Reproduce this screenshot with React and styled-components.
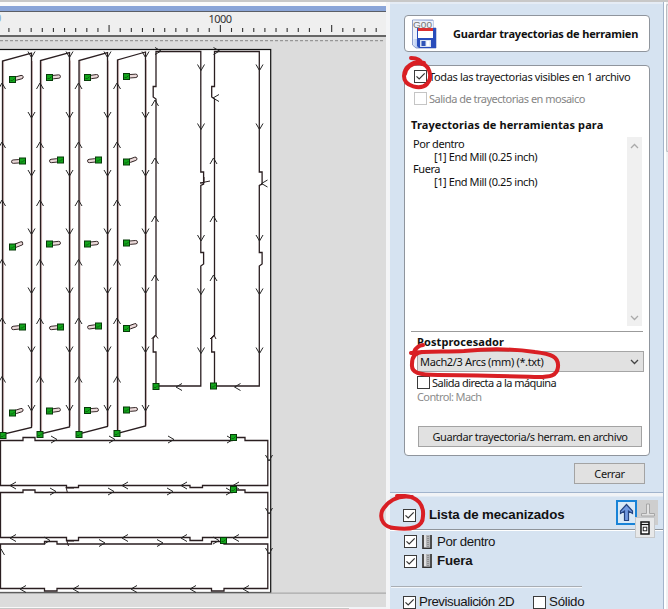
import React from "react";
import styled, { createGlobalStyle } from "styled-components";

const Global = createGlobalStyle`
  * { box-sizing: border-box; }
  body { margin: 0; background: #f1f3f6; overflow: hidden; }
`;

const tahoma = `"Noto Sans", "Open Sans", sans-serif`;
const arial = `"Liberation Sans", Arial, sans-serif`;

const Screen = styled.div`
  position: relative;
  width: 668px;
  height: 609px;
  overflow: hidden;
  display: flex;
  flex-direction: column;
  color: #111;
  font: 11px/13px ${tahoma};
`;
const TopEdge = styled.div`
  height: 2px;
  flex: none;
  background: #c8c8c8;
`;
const Columns = styled.div`
  flex: 1;
  display: flex;
`;
const Workspace = styled.section`
  width: 386px;
  display: flex;
  flex-direction: column;
`;
const TitleBar = styled.div`
  height: 10px;
  border-top: 4px solid #fbfbfb;
  border-bottom: 1px solid #5b5e66;
  background: #8aa5d8;
`;
const Ruler = styled.svg`
  display: block;
  height: 25px;
  background: #efefef;
  border-bottom: 2px solid #666;
`;
const Canvas = styled.svg`
  display: block;
  height: 570px;
  background: #dcdcdc;
`;
const BottomEdge = styled.div`
  height: 2px;
  width: 349px;
  border-top: 1px solid #f8f8f8;
  background: #c6c6c6;
`;
const Sidebar = styled.aside`
  width: 278px;
  display: flex;
  flex-direction: column;
  border-left: 4px solid #f4f5f7;
  border-right: 1px solid #a4b4cb;
`;
const ScrollEdge = styled.div`
  flex: 1;
  background: #f0f1f2;
  border-left: 2px solid #fff;
  padding-top: 2px;
`;
const ScrollPiece = styled.div`
  height: 148px;
  border: 1px solid #b9bcc2;
  border-right: 0;
  border-radius: 2px 0 0 2px;
  background: #e6e7e9;
`;
const SavePanel = styled.section`
  height: 491px;
  padding: 11px 13px 0 14px;
  background: #d6e3f1;
  border-top: 2px solid #e5ecf5;
  border-bottom: 1px solid #a2b4cc;
`;
const Heading = styled.header`
  height: 37px;
  width: 246px;
  border: 1px solid #8f959d;
  border-radius: 4px;
  background: #fff;
  display: flex;
  align-items: center;
  padding: 0 10px 0 6px;
  gap: 16px;
`;
const HeadingText = styled.h1`
  margin: 0;
  width: 186px;
  overflow: hidden;
  white-space: nowrap;
  font: bold 11px/18px ${tahoma};
  letter-spacing: -0.18px;
`;
const FormBox = styled.div`
  margin-top: 13px;
  width: 246px;
  height: 391px;
  border: 1px solid #8f959d;
  border-radius: 4px;
  background: #fff;
  padding: 2px 6px 0;
`;
const CheckLine = styled.label`
  display: flex;
  align-items: center;
  gap: ${(p) => p.$gap ?? 2}px;
  height: ${(p) => p.$h ?? 16}px;
  margin-top: ${(p) => p.$top ?? 0}px;
  padding-left: ${(p) => p.$indent ?? 0}px;
  white-space: nowrap;
  letter-spacing: ${(p) => p.$track ?? 0}px;
  color: ${(p) => (p.$muted ? "#858585" : "#161616")};
`;
const Box = styled.span`
  width: 13px;
  height: 13px;
  flex: none;
  border: 1px solid ${(p) => (p.$muted ? "#c5c5c5" : "#3b3b3b")};
  background: #fff;
  display: flex;
`;
const Subtitle = styled.h2`
  margin: ${(p) => p.$top}px 0 0 ${(p) => p.$indent ?? 0}px;
  font: bold 11px/16px ${tahoma};
  letter-spacing: ${(p) => p.$track}px;
  white-space: nowrap;
`;
const ToolList = styled.div`
  display: flex;
  justify-content: space-between;
  height: 189px;
  margin-top: 4px;
  padding-right: 1px;
`;
const ToolItems = styled.div`
  padding: 0 0 0 2px;
  letter-spacing: -0.42px;
`;
const ToolLine = styled.div`
  height: 12.7px;
  line-height: 13px;
  padding-left: ${(p) => (p.$nested ? 21 : 0)}px;
`;
const ScrollBar = styled.div`
  width: 15px;
  background: #f0f0f0;
  display: flex;
  flex-direction: column;
  justify-content: space-between;
  align-items: center;
  padding: 6px 0 5px;
`;
const Rule = styled.div`
  height: 1px;
  background: #9b9b9b;
  margin-top: 5px;
`;
const Select = styled.div`
  margin: 1px 0 0 6px;
  width: 227px;
  height: 21px;
  border: 1px solid #a5a5a5;
  background: #e1e1e1;
  display: flex;
  align-items: center;
  justify-content: space-between;
  padding: 0 4px 0 2px;
  letter-spacing: -0.34px;
`;
const Note = styled.div`
  margin: -1px 0 0 6px;
  color: #8c8c8c;
  letter-spacing: -0.6px;
  height: 15px;
  line-height: 15px;
`;
const Button = styled.button`
  display: block;
  width: ${(p) => p.$w}px;
  height: 21px;
  margin: ${(p) => p.$top}px 0 0 ${(p) => p.$left}px;
  padding: 0;
  border: 1px solid #a3a3a3;
  border-radius: 0;
  background: #e1e1e1;
  color: #161616;
  font: 11px/17px ${tahoma};
  letter-spacing: -0.4px;
  white-space: nowrap;
`;
const JobPanel = styled.section`
  flex: 1;
  margin-top: 3px;
  background: #d6e3f1;
  border-top: 1px solid #e3ebf4;
  font: 13.3px/18px ${arial};
`;
const JobHeader = styled.header`
  position: relative;
  height: 33px;
  display: flex;
  align-items: center;
  padding: 4px 5px 0 13px;
  border-bottom: 1px solid #8e949a;
  box-shadow: 0 1px #fff;
`;
const JobTitle = styled.h2`
  margin: 0 0 0 13px;
  flex: 1;
  font: bold 13.3px/18px ${arial};
  letter-spacing: -0.1px;
`;
const Move = styled.div`
  width: 21px;
  height: 25px;
  margin-top: -6px;
  display: grid;
  place-items: center;
  border: ${(p) => (p.$active ? "2px solid #1883d7" : "0")};
  background: ${(p) => (p.$active ? "#d9e9f7" : "#cecece")};
`;
const FloatingTool = styled.div`
  position: absolute;
  left: 245px;
  top: 20px;
  width: 20px;
  height: 21px;
  display: grid;
  place-items: center;
  border: 1px solid #c6c8ca;
  background: #e7e8e9;
`;
const Jobs = styled.div`
  padding: 2px 0 0 14px;
`;
const JobName = styled.span`
  font-weight: ${(p) => (p.$bold ? "bold" : "normal")};
`;
const PreviewRule = styled.div`
  width: 191px;
  height: 2px;
  margin: 15px 0 0 1px;
  background: #a9aeb4;
  border-bottom: 1px solid #f3f6fa;
`;
const PreviewOptions = styled.div`
  display: flex;
  gap: 19px;
  padding: 6px 0 0 13px;
`;
const Markup = styled.svg`
  position: absolute;
  inset: 0;
  pointer-events: none;
`;

const Tick = () => (
  <svg width="11" height="11" viewBox="0 0 11 11">
    <path d="M1.5 5.3 4.2 8 9.7 2.4" fill="none" stroke="#333" strokeWidth="1.2" />
  </svg>
);

function Check({ checked, muted }) {
  return <Box $muted={muted}>{checked && <Tick />}</Box>;
}

const Chevron = ({ up, color = "#aaa" }) => (
  <svg width="9" height="6" viewBox="0 0 9 6">
    <path d={up ? "M1 5 4.5 1.5 8 5" : "M1 1 4.5 4.5 8 1"} fill="none" stroke={color} strokeWidth="1.3" />
  </svg>
);

const DiskIcon = () => (
  <svg width="26" height="30" viewBox="0 0 26 30">
    <defs>
      <linearGradient id="disk" x1="0" x2="1">
        <stop offset="0" stopColor="#e4ecfb" />
        <stop offset=".35" stopColor="#8fabe8" />
        <stop offset="1" stopColor="#2448b5" />
      </linearGradient>
    </defs>
    <path d="M1.5 1H22v8h3v20H5l-3.5-3z" fill="url(#disk)" stroke="#7488be" strokeWidth=".8" />
    <path d="M2 1.5h20V9H7v11H2z" fill="#edf1fa" />
    <text x="2" y="9" fontFamily="Liberation Sans" fontSize="9.8" fill="#777" textLength="19" lengthAdjust="spacingAndGlyphs">G00</text>
    <path d="M6 9h19v20H8l-2-2z" fill="#294dbb" />
    <rect x="7" y="9" width="15" height="10" fill="#fff" />
    <rect x="7" y="9" width="15" height="3" fill="#db3032" />
    <rect x="9" y="21" width="11" height="7" fill="#d9e2f2" />
    <rect x="10.5" y="22" width="4" height="5" fill="#3155b8" />
    <rect x="15.5" y="22" width="3" height="5" fill="#fff" />
  </svg>
);

const MillIcon = () => (
  <svg width="10" height="14" viewBox="0 0 10 14">
    <rect width="10" height="14" fill="#b3b5b8" />
    <path d="M1 0v13.5h8V0" fill="none" stroke="#333" strokeWidth="1.6" />
    <path d="M3 0v12" stroke="#f0f0f0" strokeWidth="1.5" />
    <path d="M6 1v12" stroke="#777" strokeWidth="1.2" strokeDasharray="1 1" />
  </svg>
);

const UpIcon = () => (
  <svg width="15" height="19" viewBox="0 0 15 19">
    <path d="M7.5 1.5 13.5 8v2.5L9.5 8v9.5h-4V8l-4 2.5V8z" fill="#729ae0" stroke="#24437f" strokeWidth="1.2" />
  </svg>
);

const DownIcon = () => (
  <svg width="16" height="24" viewBox="0 0 16 24">
    <path d="M6.5 4h3v9.5h5V16h-13v-2.500h5z" fill="#e2e2e2" stroke="#a6a6a6" />
  </svg>
);

const CalcIcon = () => (
  <svg width="10" height="14" viewBox="0 0 10 14">
    <rect x="1" y="1" width="8" height="12" fill="#fff" stroke="#111" strokeWidth="1.5" />
    <path d="M1 3.5h8" stroke="#111" strokeWidth="1.2" />
    <rect x="3.2" y="6.2" width="3.6" height="3.6" fill="#fff" stroke="#222" />
  </svg>
);

const columnsX = [
  [2.5, 31.5, 61, 53, 434.5, 427.5],
  [40.5, 69.5, 60.5, 52.5, 434, 427],
  [79, 107.5, 60.5, 52.5, 434, 426.5],
  [117.5, 145.5, 60, 52, 433.5, 426],
];
const upMarks = [83, 142, 200, 259.5, 318, 376.5];
const downMarks = [57.5, 118, 176, 234.5, 293.5, 352.5, 411];

// x, y, side of the tool drawing, tilt in degrees
const pins = [
  [12.5, 79.5, 1, -15], [49.5, 77.5, 1, -6], [87.5, 77.5, 1, -8], [126.5, 76.5, 1, -4],
  [22.5, 161, -1, -4], [60.5, 160, -1, -6], [98.5, 160, -1, -6], [126.5, 162, 1, -20],
  [12.5, 247, 1, -22], [49.5, 244, 1, -6], [87.5, 244, 1, -6], [126.5, 243, 1, -5],
  [22.5, 327, -1, -6], [60.5, 327, -1, -6], [98.5, 326, -1, -8], [126.5, 328.5, 1, -20],
  [12.5, 413, 1, -18], [49.5, 411, 1, -8], [87.5, 410.5, 1, -4], [126.5, 410, 1, -5],
];
const corners = [
  [3, 435.5], [40, 434.5], [79, 434.5], [117, 433.5], [156, 386.5], [213.5, 386],
  [233.5, 437.5], [233.5, 489.5], [223.5, 540.5],
];

// Heading of each direction mark, in degrees, with 0 pointing right.
const marks = [
  ...columnsX.flatMap(([a, b]) => [
    ...upMarks.map((y) => [a - 0.5, y, -90]),
    ...downMarks.map((y) => [b, y, 90]),
  ]),
  ...[155, 213.5].flatMap((x, i) => [
    ...(i ? [158, 216, 275] : [100, 158, 216, 275]).map((y) => [x, y, -90]),
    ...[70.5, 129.5, 241, 294.5, 353.5].map((y) => [x + 46, y, 90]),
    [x + 6, 51, 0],
    [x + 21, 387, 180],
  ]),
  [213, 98, 180], [261.5, 183.5, 180],
  ...[57, 115, 174, 233].flatMap((x) => [[x, 439.5, 0], [x - 1, 491.5, 0]]),
  ...[50, 105, 163, 219].map((x, i) => [x, i % 3 ? 543 : 540.5, 0]),
  ...[10, 122, 181, 233].flatMap((x) => [[x, 485.5, 180], [x, 538, 180]]),
  ...[20, 73, 131, 190, 243].map((x) => [x, 589, 180]),
  [269, 461, 90], [269, 514, 90], [269, 554, 90], [1, 549, -90],
];

function Toolpaths() {
  return (
    <Canvas width="386" height="570" viewBox="0 37 386 570">
      <path d="M0 40.7H384" stroke="#858585" strokeDasharray="3 2" />
      <rect x="-2" y="49.5" width="272.7" height="543" fill="#fff" stroke="#111" strokeWidth="1.2" />
      <path d="M0 593.2H386" stroke="#aaa" strokeWidth="1.3" />
      <g fill="none" stroke="#b58f8f" strokeWidth="1.6" opacity=".6">
        {columnsX.map(([a, b, t, , l]) => (
          <path key={a} d={`M${a + 0.8} ${t}V${l}M${b + 0.6} ${t}V${l - 8}`} />
        ))}
      </g>
      <g fill="none" stroke="#2a1e20" strokeWidth="1.3">
        {columnsX.map(([a, b, tl, tr, bl, br]) => (
          <path key={a} d={`M${a} ${bl}V${tl}L${b} ${tr}V${br}Z`} />
        ))}
        {[156, 214.5].map((x) => {
          const r = x + 44.8;
          return (
            <path
              key={x}
              d={`M${x} 386V352h-2.8V338l2.8-3V99l-2.8-2V86.5h2.8V51.5H${r}V172h2.8v12l-2.8 1.5V252.5h2.8V264l-2.8 2V386Z`}
            />
          );
        })}
        <path d="M.5 440.5H23v-3H35v3H232v-3h13v3H267.8V485.5H202.5v2h-12.5v-2H78.5v2H66.5v-2H.5Z" />
        <path d="M.5 492.5H23V490H35v2.5H232V490h13v2.5H267.8V537.5H202.5v3h-12.5v-3H78.5v3H66.5v-3H.5Z" />
        <path d="M.5 544H44.5v-2.5H57V544H211.5v-2.5H224V544H267.8V588.5H224v2.5h-12.5v-2.5H57V591H44.5v-2.5H.5Z" />
        <path
          d="M151.500 339l4-4 2.500 3.500M210 339l4-4 2 4M66 487l1.500 6M67 488h7M66.5 540l2 6M67 541h7M204 177v6h-4l10-2"
          strokeWidth="1"
        />
      </g>
      <g fill="none" stroke="#252525" strokeWidth="1">
        {marks.map(([x, y, deg], i) => (
          <path key={i} d="M-6-3.5 0 0-6 3.5" transform={`translate(${x} ${y}) rotate(${deg})`} />
        ))}
      </g>
      {pins.map(([x, y, side, deg], i) => (
        <g key={i} transform={`translate(${x} ${y})`}>
          <rect
            x={side > 0 ? 2 : -11} y="-1.7" width="9" height="3.4" rx="1.7"
            transform={`rotate(${deg})`} fill="#ead9d9" stroke="#2b1d1d" strokeWidth=".9"
          />
          <Pin />
        </g>
      ))}
      {corners.map(([x, y], i) => (
        <g key={i} transform={`translate(${x} ${y})`}><Pin /></g>
      ))}
    </Canvas>
  );
}

const Pin = () => (
  <>
    <rect x="-3" y="-3" width="6" height="6" fill="#13a51c" stroke="#063b08" />
    <path d="M-2 1 0 1 2-1" stroke="#07500a" strokeWidth=".7" fill="none" />
  </>
);

function Scale() {
  const ticks = Array.from({ length: 34 }, (_, i) => i);
  return (
    <Ruler width="386" height="25" viewBox="0 12 386 23">
      <text x="-5" y="22" fontFamily="Noto Sans" fontSize="11" fill="#84a9cd">0</text>
      {ticks.map((i) => {
        const long = i % 10 === 9;
        return (
          <path key={i} d={`M${8.9 + i * 11.13} ${long ? 25 : 28}V32`} stroke="#333" strokeWidth="1.1" />
        );
      })}
      <text x="208.500" y="22.500" fontFamily="Noto Sans" fontSize="11" fill="#333" textLength="23.500">1000</text>
    </Ruler>
  );
}

export default function App() {
  return (
    <Screen>
      <Global />
      <TopEdge />
      <Columns>
        <Workspace>
          <TitleBar />
          <Scale />
          <Toolpaths />
          <BottomEdge />
        </Workspace>
        <Sidebar>
          <SavePanel>
            <Heading>
              <DiskIcon />
              <HeadingText>Guardar trayectorias de herramien</HeadingText>
            </Heading>
            <FormBox>
              <CheckLine $indent={3} $track={-0.36}>
                <Check checked />Todas las trayectorias visibles en 1 archivo
              </CheckLine>
              <CheckLine $indent={3} $top={6} $track={-0.5} $muted>
                <Check muted />Salida de trayectorias en mosaico
              </CheckLine>
              <Subtitle $top={11} $track={0.1}>Trayectorias de herramientas para</Subtitle>
              <ToolList>
                <ToolItems>
                  <ToolLine>Por dentro</ToolLine>
                  <ToolLine $nested>[1] End Mill (0.25 inch)</ToolLine>
                  <ToolLine>Fuera</ToolLine>
                  <ToolLine $nested>[1] End Mill (0.25 inch)</ToolLine>
                </ToolItems>
                <ScrollBar><Chevron up /><Chevron /></ScrollBar>
              </ToolList>
              <Rule />
              <Subtitle $top={2} $indent={6} $track={0.1}>Postprocesador</Subtitle>
              <Select>Mach2/3 Arcs (mm) (*.txt)<Chevron color="#444" /></Select>
              <CheckLine $indent={6} $top={2} $track={-0.54}>
                <Check />Salida directa a la máquina
              </CheckLine>
              <Note>Control: Mach</Note>
              <Button $w={224} $top={22} $left={7}>Guardar trayectoria/s herram. en archivo</Button>
            </FormBox>
            <Button $w={71} $top={7} $left={170}>Cerrar</Button>
          </SavePanel>
          <JobPanel>
            <JobHeader>
              <Check checked />
              <JobTitle>Lista de mecanizados</JobTitle>
              <Move $active><UpIcon /></Move>
              <Move><DownIcon /></Move>
              <FloatingTool><CalcIcon /></FloatingTool>
            </JobHeader>
            <Jobs>
              <CheckLine $gap={5} $h={19} $track={-0.4}><Check checked /><MillIcon /><JobName>Por dentro</JobName></CheckLine>
              <CheckLine $gap={5} $h={20} $track={-0.15}><Check checked /><MillIcon /><JobName $bold>Fuera</JobName></CheckLine>
            </Jobs>
            <PreviewRule />
            <PreviewOptions>
              <CheckLine $gap={3} $track={-0.45}><Check checked />Previsualición 2D</CheckLine>
              <CheckLine $gap={3} $track={-0.3}><Check />Sólido</CheckLine>
            </PreviewOptions>
          </JobPanel>
        </Sidebar>
        <ScrollEdge><ScrollPiece /></ScrollEdge>
      </Columns>
      <Markup width="668" height="609" fill="none" stroke="#d91f24" strokeWidth="4" strokeLinecap="round" strokeLinejoin="round">
        <path d="M411 58c7 0 10 2 11 6M424 63c-12-3-20 5-20 13 0 11 17 14 23 8 6-7 3-20-8-21-8 0-13 5-14 11" />
        <path d="M423 345c-7 1-8 5-9 7M411 353c15-2 34-1 53-2 21-2 44-3 71 1 17 2 24 5 23 15-1 9-8 10-20 10-36-1-69-2-100-2-19 0-27-2-26-11 0-8 4-12 11-12" />
        <path d="M412 497c-15-3-26 6-30 14-3 10 3 16 12 17 17 2 29 0 29-12 1-11-5-19-18-20h-8" />
      </Markup>
    </Screen>
  );
}
